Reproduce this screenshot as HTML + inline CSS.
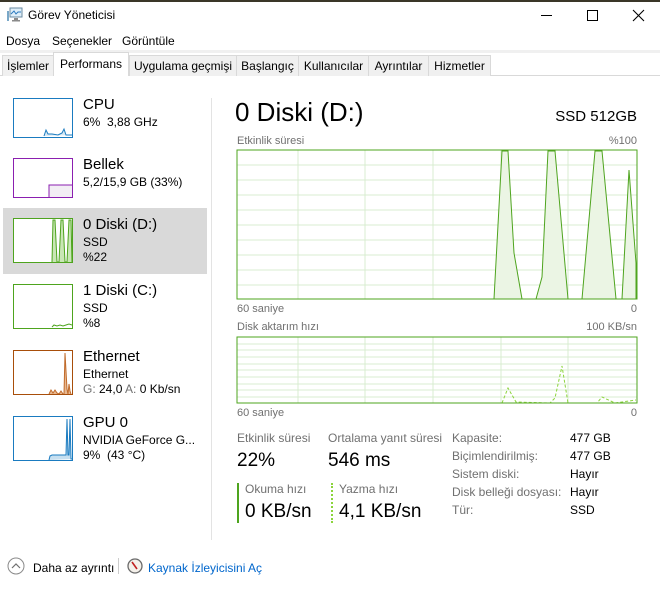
<!DOCTYPE html>
<html><head><meta charset="utf-8"><style>
*{margin:0;padding:0;box-sizing:border-box}
body{width:660px;height:591px;background:#fff;font-family:"Liberation Sans",sans-serif;color:#000;position:relative;overflow:hidden;font-size:12px}
.a{position:absolute;white-space:nowrap}
.g{color:#707070}
.tab{position:absolute;top:55px;height:21px;border:1px solid #d9d9d9;border-bottom:none;background:#f0f0f0;font-size:12px;padding:3px 0 0 0;text-align:center}
.thumb{position:absolute;left:13px;width:60px;border:1px solid}
.lbl{font-size:15px}
.sub{font-size:12px}
</style></head><body>
<div class="a" style="left:0;top:0;width:660px;height:2px;background:#3a3628"></div>
<!-- title -->
<svg class="a" style="left:7px;top:7px" width="16" height="16" viewBox="0 0 16 16"><rect x="3" y="1" width="12" height="9" fill="#dfeef8" stroke="#6a8aa0"/><polyline points="4,7 7,4 9,7 11,5 14,5" fill="none" stroke="#2b7ac0"/><rect x="7" y="11" width="4" height="2" fill="#8a8a8a"/><rect x="5" y="13" width="8" height="1.5" fill="#8a8a8a"/><rect x="0" y="4" width="2" height="10" fill="#7aa8c8"/></svg>
<div class="a" style="left:28px;top:8px;font-size:12px">Görev Yöneticisi</div>
<div class="a" style="left:541px;top:15px;width:11px;height:1px;background:#000"></div>
<div class="a" style="left:587px;top:10px;width:11px;height:11px;border:1px solid #000"></div>
<svg class="a" style="left:632px;top:9px" width="13" height="13"><path d="M1 1L12 12M12 1L1 12" stroke="#000" stroke-width="1.1"/></svg>
<!-- menu -->
<div class="a" style="left:6px;top:34px">Dosya</div>
<div class="a" style="left:52px;top:34px">Seçenekler</div>
<div class="a" style="left:122px;top:34px">Görüntüle</div>
<div class="a" style="left:0;top:50px;width:660px;height:3px;background:#f0f0f0"></div>
<!-- tabs -->
<div class="a" style="left:0;top:75px;width:660px;height:1px;background:#d9d9d9"></div>
<div class="tab" style="left:2px;width:52px">İşlemler</div>
<div class="tab" style="left:53px;top:52px;height:24px;width:76px;background:#fff;border-color:#d9d9d9;padding-top:4px">Performans</div>
<div class="tab" style="left:129px;width:108px">Uygulama geçmişi</div>
<div class="tab" style="left:236px;width:63px">Başlangıç</div>
<div class="tab" style="left:298px;width:71px">Kullanıcılar</div>
<div class="tab" style="left:368px;width:61px">Ayrıntılar</div>
<div class="tab" style="left:428px;width:63px">Hizmetler</div>
<!-- sidebar -->
<div class="a" style="left:211px;top:98px;width:1px;height:442px;background:#e3e3e3"></div>
<div class="a" style="left:3px;top:208px;width:204px;height:66px;background:#d9d9d9"></div>

<svg class="thumb" style="top:98px;height:40px;border-color:#1a7bc0" viewBox="0 0 58 38" preserveAspectRatio="none"><polyline points="30,37 32,31 34,35 38,35 44,36 48,34 50,30 52,36 58,36" fill="#d6e8f4" stroke="#1a7bc0"/></svg>
<div class="a lbl" style="left:83px;top:96px">CPU</div>
<div class="a sub" style="left:83px;top:115px">6%&nbsp; 3,88 GHz</div>

<svg class="thumb" style="top:158px;height:40px;border-color:#8b1fb0" viewBox="0 0 58 38" preserveAspectRatio="none"><rect x="35" y="26" width="24" height="13" fill="#f2eef4" stroke="#8b1fb0"/></svg>
<div class="a lbl" style="left:83px;top:156px">Bellek</div>
<div class="a sub" style="left:83px;top:175px">5,2/15,9 GB (33%)</div>

<svg class="thumb" style="top:218px;height:45px;border-color:#4ea41e;background:#fff" viewBox="0 0 58 43" preserveAspectRatio="none"><polyline points="38,43 39,1 41,1 43,43 45,43 47,1 49,1 51,43 53,43 55,1 57,1 58,43" fill="#c9e6b5" stroke="#4ea41e"/></svg>
<div class="a lbl" style="left:83px;top:216px">0 Diski (D:)</div>
<div class="a sub" style="left:83px;top:235px">SSD</div>
<div class="a sub" style="left:83px;top:250px">%22</div>

<svg class="thumb" style="top:284px;height:45px;border-color:#4ea41e" viewBox="0 0 58 43" preserveAspectRatio="none"><polyline points="38,42 40,40 43,41 46,40 49,41 52,40 55,39 58,40" fill="none" stroke="#4ea41e"/></svg>
<div class="a lbl" style="left:83px;top:282px">1 Diski (C:)</div>
<div class="a sub" style="left:83px;top:301px">SSD</div>
<div class="a sub" style="left:83px;top:316px">%8</div>

<svg class="thumb" style="top:350px;height:45px;border-color:#a84e0a" viewBox="0 0 58 43" preserveAspectRatio="none"><polyline points="35,43 37,39 39,42 41,39 43,42 45,43 47,40 49,43 50,43 51,2 53,38 54,43 55,33 56,40 57,43" fill="#e8b890" stroke="#c06a2a"/></svg>
<div class="a lbl" style="left:83px;top:348px">Ethernet</div>
<div class="a sub" style="left:83px;top:367px">Ethernet</div>
<div class="a sub" style="left:83px;top:382px"><span class="g">G:</span> 24,0 <span class="g">A:</span> 0 Kb/sn</div>

<svg class="thumb" style="top:416px;height:45px;border-color:#1a7bc0" viewBox="0 0 58 43" preserveAspectRatio="none"><polyline points="35,43 36,39 38,38 52,38 53,2 54,38 55,38 56,2 57,42 58,42" fill="#c6dff0" stroke="#1a7bc0"/></svg>
<div class="a lbl" style="left:83px;top:414px">GPU 0</div>
<div class="a sub" style="left:83px;top:433px">NVIDIA GeForce G...</div>
<div class="a sub" style="left:83px;top:448px">9%&nbsp; (43 °C)</div>

<!-- main -->
<div class="a" style="left:235px;top:97px;font-size:26px">0 Diski (D:)</div>
<div class="a" style="right:23px;top:108px;font-size:15px">SSD 512GB</div>
<div class="a g" style="left:237px;top:135px;font-size:11px">Etkinlik süresi</div>
<div class="a g" style="right:23px;top:135px;font-size:11px">%100</div>
<svg class="a" style="left:236px;top:149px" width="402" height="152" viewBox="236 149 402 152">
<g stroke="#d9ecd0" stroke-width="1">
<path d="M237 165H637M237 180H637M237 195H637M237 210H637M237 225H637M237 240H637M237 255H637M237 270H637M237 285H637"/>
<path d="M298 150V299M365 150V299M433 150V299M501 150V299M568 150V299"/>
</g>
<g fill="#ebf5e4" stroke="#4ea41e" stroke-width="1">
<polygon points="494,299 502,151 508,151 514,253 522,299"/>
<polygon points="536,299 542,277 548,151 555,151 568,299"/>
<polygon points="582,299 595,151 602,151 616,299"/>
<polyline points="622,299 629,170 636,263 636,299"/>
</g>
<rect x="237" y="150" width="400" height="149" fill="none" stroke="#4ea41e"/>
</svg>
<div class="a g" style="left:237px;top:303px;font-size:11px">60 saniye</div>
<div class="a g" style="right:23px;top:303px;font-size:11px">0</div>
<div class="a g" style="left:237px;top:321px;font-size:11px">Disk aktarım hızı</div>
<div class="a g" style="right:23px;top:321px;font-size:11px">100 KB/sn</div>
<svg class="a" style="left:236px;top:336px" width="402" height="69" viewBox="236 336 402 69">
<g stroke="#d9ecd0" stroke-width="1">
<path d="M237 344H637M237 350H637M237 357H637M237 364H637M237 370H637M237 377H637M237 384H637M237 390H637M237 397H637"/>
<path d="M298 337V403M365 337V403M433 337V403M501 337V403M568 337V403"/>
</g>
<polyline points="502,403 508,388 516,402 550,403 555,398 562,366 568,403 597,403 602,397 615,403 636,400" fill="none" stroke="#8cd43c" stroke-dasharray="3,2"/>
<rect x="237" y="337" width="400" height="66" fill="none" stroke="#4ea41e"/>
</svg>
<div class="a g" style="left:237px;top:407px;font-size:11px">60 saniye</div>
<div class="a g" style="right:23px;top:407px;font-size:11px">0</div>

<div class="a g" style="left:237px;top:431px">Etkinlik süresi</div>
<div class="a" style="left:237px;top:450px;font-size:19px">22%</div>
<div class="a g" style="left:328px;top:431px">Ortalama yanıt süresi</div>
<div class="a" style="left:328px;top:450px;font-size:19px">546 ms</div>
<div class="a" style="left:237px;top:483px;width:2px;height:40px;background:#4ea41e"></div>
<div class="a g" style="left:245px;top:482px">Okuma hızı</div>
<div class="a" style="left:245px;top:501px;font-size:19px">0 KB/sn</div>
<div class="a" style="left:331px;top:483px;width:0;height:40px;border-left:2px dotted #8cd43c"></div>
<div class="a g" style="left:339px;top:482px">Yazma hızı</div>
<div class="a" style="left:339px;top:501px;font-size:19px">4,1 KB/sn</div>

<div class="a g" style="left:452px;top:431px">Kapasite:</div><div class="a" style="left:570px;top:431px">477 GB</div>
<div class="a g" style="left:452px;top:449px">Biçimlendirilmiş:</div><div class="a" style="left:570px;top:449px">477 GB</div>
<div class="a g" style="left:452px;top:467px">Sistem diski:</div><div class="a" style="left:570px;top:467px">Hayır</div>
<div class="a g" style="left:452px;top:485px">Disk belleği dosyası:</div><div class="a" style="left:570px;top:485px">Hayır</div>
<div class="a g" style="left:452px;top:503px">Tür:</div><div class="a" style="left:570px;top:503px">SSD</div>

<!-- bottom -->
<svg class="a" style="left:7px;top:557px" width="18" height="18"><circle cx="9" cy="9" r="8" fill="none" stroke="#8a8a8a"/><path d="M5 11L9 7L13 11" fill="none" stroke="#707070" stroke-width="1.2"/></svg>
<div class="a" style="left:33px;top:561px">Daha az ayrıntı</div>
<div class="a" style="left:118px;top:558px;width:1px;height:16px;background:#ccc"></div>
<svg class="a" style="left:127px;top:558px" width="16" height="16"><circle cx="8" cy="8" r="7" fill="#f4f0ea" stroke="#6a6a6a" stroke-width="1.3"/><path d="M5 4L10 11" stroke="#c02020" stroke-width="1.6"/></svg>
<div class="a" style="left:148px;top:561px;color:#0066cc">Kaynak İzleyicisini Aç</div>
</body></html>
